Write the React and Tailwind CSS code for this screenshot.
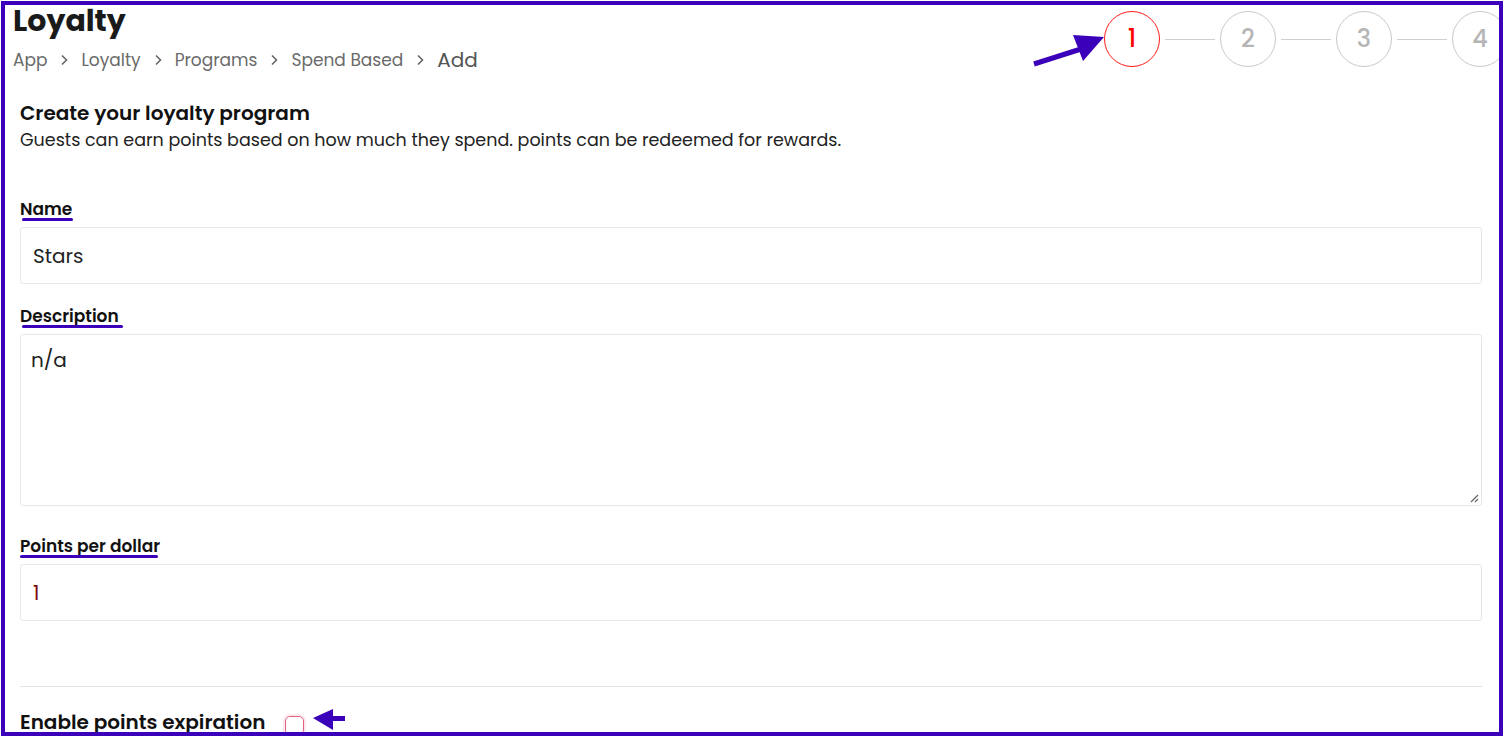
import React from "react";

const font = { fontFamily: '"Poppins", "Open Sans", sans-serif' };

function Label({ children, bar }) {
  return (
    <div className="relative h-[24px]">
      <span className="text-[17px] leading-[24px] font-semibold text-[#111]">{children}</span>
      <span className={`absolute top-[21px] h-[3px] rounded-full bg-[#3b00b9] ${bar}`} />
    </div>
  );
}

function Chevron() {
  return (
    <svg width="10" height="14" viewBox="0 0 10 14" className="mx-[12px]">
      <path d="M3 2.5 L7.5 7 L3 11.5" fill="none" stroke="#666" strokeWidth="1.6" />
    </svg>
  );
}

function Step({ n, active }) {
  return (
    <div
      className={`w-[56px] h-[56px] shrink-0 rounded-full border flex items-center justify-center text-[24px] font-medium ${
        active ? "border-[#ff1a1a] text-[#ff0000]" : "border-[#c8c8c8] text-[#b5b5b5]"
      }`}
    >
      {n}
    </div>
  );
}

function Line() {
  return <div className="w-[50px] h-px bg-[#cfcfcf] mx-[5px] shrink-0" />;
}

export default function App() {
  return (
    <div className="w-[1504px] h-[738px] bg-white overflow-hidden" style={font}>
      <div className="relative ml-[1px] mt-[1px] w-[1502px] h-[735px] border-4 border-[#3b00b9] overflow-hidden">
        {/* header */}
        <div className="flex h-[88px]">
          <div className="pl-[8px]">
            <div className="text-[30px] leading-[32px] font-bold text-[#1a1a1a]">Loyalty</div>
            <div className="flex items-center mt-[11px] text-[17px] leading-[24px] text-[#6a6a6a]">
              <span>App</span>
              <Chevron />
              <span>Loyalty</span>
              <Chevron />
              <span>Programs</span>
              <Chevron />
              <span>Spend Based</span>
              <Chevron />
              <span className="text-[20px] text-[#555]">Add</span>
            </div>
          </div>
          <div className="ml-auto mr-[-9px] mt-[6px] flex items-center h-[56px]">
            <Step n="1" active />
            <Line />
            <Step n="2" />
            <Line />
            <Step n="3" />
            <Line />
            <Step n="4" />
          </div>
        </div>

        {/* form */}
        <div className="pl-[15px] pr-[17px]">
          <div className="mt-[8px] text-[20px] leading-[24px] font-semibold text-[#111]">Create your loyalty program</div>
          <div className="mt-[3px] text-[17.5px] leading-[24px] text-[#222]">
            Guests can earn points based on how much they spend. points can be redeemed for rewards.
          </div>

          <div className="mt-[45px]">
            <Label bar="w-[51px] left-[2px]">Name</Label>
          </div>
          <div className="mt-[6px] h-[57px] border border-[#e6e6e6] rounded-[3px] flex items-center pl-[12px] text-[20px] text-[#222]">
            Stars
          </div>

          <div className="mt-[20px]">
            <Label bar="w-[101px] left-[2px]">Description</Label>
          </div>
          <div className="relative mt-[6px] h-[172px] border border-[#e6e6e6] rounded-[3px] pl-[10px] pt-[13px] text-[20px] leading-[24px] text-[#222]">
            n/a
            <svg className="absolute right-[2px] bottom-[2px]" width="10" height="10" viewBox="0 0 10 10">
              <path d="M9 2 L2 9 M9 6 L6 9" stroke="#666" strokeWidth="1.3" />
            </svg>
          </div>

          <div className="mt-[28px]">
            <Label bar="w-[138px] left-0">Points per dollar</Label>
          </div>
          <div className="mt-[6px] h-[57px] border border-[#e6e6e6] rounded-[3px] flex items-center pl-[12px] text-[20px] text-[#7a0a0a]">
            1
          </div>

          <div className="mt-[65px] border-t border-[#e3e3e3]" />

          <div className="mt-[23px] flex items-center h-[24px]">
            <span className="text-[20px] leading-[24px] font-semibold text-[#111]">Enable points expiration</span>
            <span className="ml-[20px] mt-[6px] w-[19px] h-[19px] rounded-[5px] border border-[#e0607e] shadow-[0_0_0_2px_#fbe9ee]" />
          </div>
        </div>

        {/* annotation arrows */}
        <svg className="absolute left-[1021px] top-[22px]" width="80" height="42" viewBox="0 0 80 42">
          <path d="M8 37 L55 22" stroke="#3b00b9" strokeWidth="5" />
          <path d="M47 8 L78 10 L57 34 Z" fill="#3b00b9" />
        </svg>
        <svg className="absolute left-[302px] top-[700px]" width="40" height="28" viewBox="0 0 40 28">
          <path d="M6 13 L26 4 L26 25 Z" fill="#3b00b9" />
          <rect x="24" y="11" width="14" height="5" fill="#3b00b9" />
        </svg>
      </div>
    </div>
  );
}
